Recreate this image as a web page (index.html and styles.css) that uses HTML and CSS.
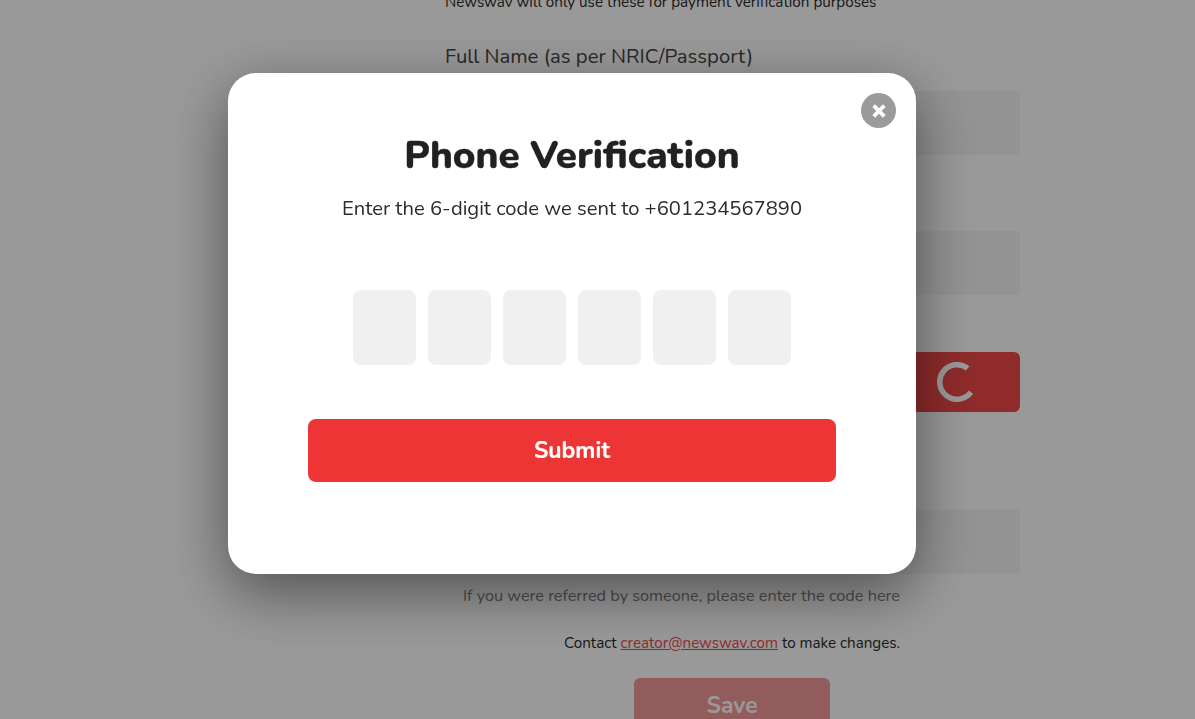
FILE: index.html
```html
<!DOCTYPE html>
<html lang="en">
<head>
<meta charset="utf-8">
<title>Phone Verification</title>
<link rel="stylesheet" href="styles.css">
</head>
<body>
<main class="page">
  <p class="note">Newswav will only use these for payment verification purposes</p>
  <label class="label">Full Name (as per NRIC/Passport)</label>
  <div class="input"></div>
  <div class="input input-second"></div>
  <div class="phone-row">
    <div class="send-btn">
      <svg class="spinner" viewBox="0 0 40 40" width="40" height="40"><path d="M32.7 6.4A17.3 17.3 0 1 0 36 30.2" fill="none" stroke="#fff" stroke-width="5.5"/></svg>
    </div>
  </div>
  <div class="input input-referral"></div>
  <p class="hint">If you were referred by someone, please enter the code here</p>
  <p class="contact">Contact <a href="#">creator@newswav.com</a> to make changes.</p>
  <div class="save">Save</div>
</main>
<div class="overlay">
  <section class="modal">
    <button class="close" aria-label="Close">
      <svg viewBox="0 0 16 16" width="16" height="16"><path d="M2.7 2.7L13.3 13.3M13.3 2.7L2.7 13.3" fill="none" stroke="#fff" stroke-width="3.8"/></svg>
    </button>
    <h1 class="title">Phone Verification</h1>
    <p class="sub">Enter the 6-digit code we sent to +601234567890</p>
    <div class="code">
      <div class="digit"></div><div class="digit"></div><div class="digit"></div><div class="digit"></div><div class="digit"></div><div class="digit"></div>
    </div>
    <button class="submit">Submit</button>
  </section>
</div>
</body>
</html>
```
FILE: styles.css
```css
* { box-sizing: border-box; }
html, body { margin: 0; height: 100%; overflow: hidden; background: #fff; }
body { font-family: "Nunito", "Lato", "Noto Sans", sans-serif; color: #212121; }

.page { width: 575px; height: 719px; margin-left: 445px; overflow: hidden; }
.note { margin: -8px 0 0; font-size: 15.24px; line-height: 20px; white-space: nowrap; color: #2b2b2b; }
.label { display: block; margin-top: 29px; font-size: 20.3px; line-height: 30px; color: #444; }
.input { height: 64px; margin-top: 20px; background: #f5f5f5; border-radius: 4px; }
.input-second { margin-top: 76px; }
.phone-row { display: flex; justify-content: flex-end; margin-top: 57px; }
.send-btn { width: 130px; height: 60px; background: #ee3535; opacity: .9; border-radius: 6px; display: flex; align-items: center; justify-content: center; }
.input-referral { margin-top: 98px; }
.hint { width: 455px; margin: 11px 0 0; text-align: right; font-size: 16.3px; line-height: 22px; color: #808080; }
.contact { width: 455px; margin: 26px 0 0; text-align: right; font-size: 15.2px; line-height: 20px; color: #2b2b2b; }
.contact a { color: #f04848; }
.save { width: 196px; height: 60px; margin: 25px 0 0 189px; background: #ee3535; opacity: .5; border-radius: 6px; color: #fff; font-size: 22.9px; font-weight: 700; text-align: center; line-height: 56px; }

.overlay { position: fixed; inset: 0; background: rgba(0,0,0,.4); }
.modal { position: absolute; left: 228px; top: 73px; width: 688px; height: 501px; background: #fff; border-radius: 28px; box-shadow: 0 18px 60px rgba(0,0,0,.48); display: flex; flex-direction: column; align-items: center; }
.close { position: absolute; top: 20px; right: 20px; width: 35px; height: 35px; padding: 0; border: 0; border-radius: 50%; background: #9b9b9b; display: flex; align-items: center; justify-content: center; }
.title { margin: 57px 0 0; font-size: 38.5px; line-height: 51px; font-weight: 800; color: #212121; -webkit-text-stroke: .4px #212121; }
.sub { margin: 13px 0 0; font-size: 20.2px; line-height: 30px; color: #2b2b2b; }
.code { display: flex; gap: 12px; margin-top: 66px; }
.digit { width: 63px; height: 75px; background: #f0f0f0; border-radius: 8px; }
.submit { width: 528px; height: 63px; margin-top: 54px; border: 0; border-radius: 8px; background: #ee3535; color: #fff; font-family: inherit; font-size: 22.9px; font-weight: 700; -webkit-text-stroke: .2px #fff; }
```
